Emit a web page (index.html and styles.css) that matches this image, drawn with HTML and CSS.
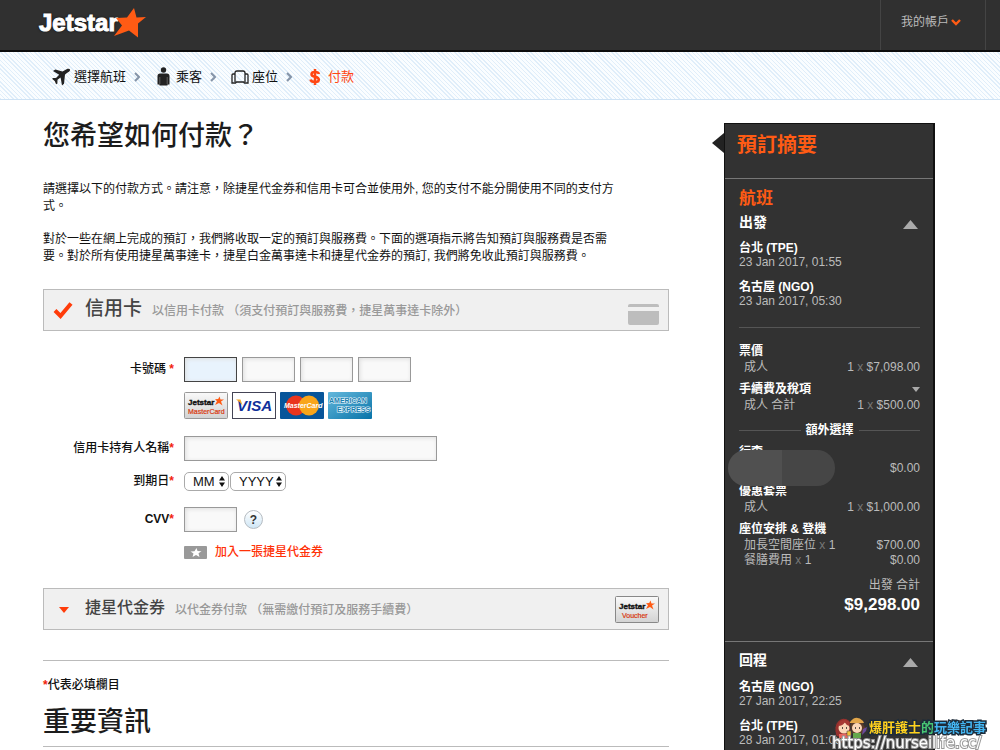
FILE: index.html
```
<!DOCTYPE html>
<html lang="zh-TW">
<head>
<meta charset="utf-8">
<meta name="viewport" content="width=device-width, initial-scale=1">
<title>Jetstar 付款</title>
<link rel="stylesheet" href="styles.css">
</head>
<body>
<header class="topbar">
  <a class="logo" href="#" aria-label="Jetstar">
    <span>Jetstar</span>
    <svg class="logo-star" viewBox="0 0 32 30" aria-hidden="true"><path d="M20 0l2.500 9.500L32 9l-8 6.500 0 14L15 22.500 0 28l8-10.500L2 10l11-.5z"/></svg>
  </a>
  <a class="account" href="#">我的帳戶
    <svg width="10" height="8" viewBox="0 0 10 8" aria-hidden="true"><path d="M1 2l4 4 4-4" fill="none" stroke="#ff5b14" stroke-width="2.400"/></svg>
  </a>
</header>

<nav class="steps" aria-label="步驟">
  <a class="step" href="#">
    <svg width="19" height="18" viewBox="0 0 19 18" aria-hidden="true"><path d="M1 3l2.300-1.500 7.200 2 4-2.200c1.600-.7 3.200-.6 3.500.1.300.8-.5 2-2 2.900l-3 2.100-1 9.400-2 1.700-1.400-8L5.500 11.800l-.1 3.700-1.300.8-1.400-3.300L0 10.800l1.300-.9 2.700.1L7.200 6.700z" fill="#222"/></svg>
    <span>選擇航班</span>
  </a>
  <svg class="sep" viewBox="0 0 6 10" aria-hidden="true"><path d="M1 1l4 4-4 4"/></svg>
  <a class="step step-passenger" href="#">
    <svg width="13" height="19" viewBox="0 0 13 19" aria-hidden="true"><circle cx="6.500" cy="3" r="2.700" fill="#222"/><path d="M3 6.500h7a2.500 2.500 0 0 1 2.500 2.500v8.500h-2v1h-8v-1H.5V9A2.500 2.500 0 0 1 3 6.500z" fill="#222"/><path d="M2.800 10v7M10.200 10v7" stroke="#888" stroke-width=".6"/></svg>
    <span>乘客</span>
  </a>
  <svg class="sep" viewBox="0 0 6 10" aria-hidden="true"><path d="M1 1l4 4-4 4"/></svg>
  <a class="step" href="#">
    <svg width="18" height="14" viewBox="0 0 18 14" aria-hidden="true"><path d="M4 12V3q0-2 2-2h6q2 0 2 2v9M4 4H2Q1 4 1 5v8h3.500l1-1h7l1 1H17V5q0-1-1-1h-2" fill="none" stroke="#222" stroke-width="1.300"/></svg>
    <span>座位</span>
  </a>
  <svg class="sep" viewBox="0 0 6 10" aria-hidden="true"><path d="M1 1l4 4-4 4"/></svg>
  <a class="step step-current" href="#" aria-current="step">
    <svg width="12" height="16" viewBox="0 0 12 16" aria-hidden="true"><path d="M10 5Q9.500 3 6 3 2.500 3 2.500 5.200 2.500 7.200 6 7.800 9.800 8.500 9.800 10.700 9.800 13 6 13 2 13 1.500 10.500M6 0v16" fill="none" stroke="#ff4713" stroke-width="2.500"/></svg>
    <span>付款</span>
  </a>
</nav>

<div class="page">
  <main class="content">
    <h1>您希望如何付款？</h1>
    <p>請選擇以下的付款方式。請注意，除捷星代金券和信用卡可合並使用外, 您的支付不能分開使用不同的支付方式。</p>
    <p>對於一些在網上完成的預訂，我們將收取一定的預訂與服務費。下面的選項指示將告知預訂與服務費是否需要。對於所有使用捷星萬事達卡，捷星白金萬事達卡和捷星代金券的預訂, 我們將免收此預訂與服務費。</p>

    <section class="panel panel-card">
      <svg class="panel-mark" viewBox="0 0 20 18" aria-hidden="true"><path d="M2 9.500l5.500 5.500L18 2.500" fill="none" stroke="#ff3c0a" stroke-width="4"/></svg>
      <h2>信用卡</h2>
      <span class="panel-note">以信用卡付款 （須支付預訂與服務費，捷星萬事達卡除外）</span>
      <svg class="panel-end card-icon" viewBox="0 0 31 21" aria-hidden="true"><path d="M2 0h27q2 0 2 2v1H0V2q0-2 2-2zM0 7h31v12q0 2-2 2H2q-2 0-2-2z" fill="#bdbdbd"/></svg>
    </section>

    <form class="form">
      <div class="row">
        <label for="card1">卡號碼 <i>*</i></label>
        <div class="field digits">
          <input class="box active" id="card1" type="text">
          <input class="box" type="text" aria-label="卡號碼 2">
          <input class="box" type="text" aria-label="卡號碼 3">
          <input class="box" type="text" aria-label="卡號碼 4">
        </div>
      </div>
      <div class="row row-brands">
        <div class="field brands">
          <svg viewBox="0 0 44 27" role="img" aria-label="Jetstar MasterCard"><defs><linearGradient id="grey" x2="0" y2="1"><stop stop-color="#fafafa"/><stop offset="1" stop-color="#d2d2d2"/></linearGradient></defs><rect x=".5" y=".5" width="43" height="26" rx="1" fill="url(#grey)" stroke="#999"/><text x="4" y="13" class="brand-jet">Jetstar</text><path d="M35.500 4.500l1 3h3.500l-3 2 1.500 4-3.500-2.500-4 2 2-3.800-2-2 3.200-.2z" fill="#ff5b14"/><text x="4" y="22" class="brand-sub">MasterCard</text></svg>
          <svg viewBox="0 0 44 27" role="img" aria-label="VISA"><rect x=".5" y=".5" width="43" height="26" fill="#fff" stroke="#445"/><text x="5" y="19" class="brand-visa">VISA</text><path d="M4 7.500h4.500l2 6Q8.500 10 4 7.500z" fill="#f5a623"/></svg>
          <svg viewBox="0 0 44 27" role="img" aria-label="MasterCard"><rect width="44" height="27" rx="1" fill="#07559a"/><circle cx="16" cy="13.500" r="10" fill="#e9351e"/><circle cx="29" cy="13.500" r="10" fill="#f8a51b"/><text x="4" y="16" class="brand-mc">MasterCard</text></svg>
          <svg viewBox="0 0 44 27" role="img" aria-label="American Express"><defs><linearGradient id="blue" x2="1" y2="1"><stop stop-color="#64b8dc"/><stop offset="1" stop-color="#0873a8"/></linearGradient></defs><rect width="44" height="27" rx="1" fill="url(#blue)"/><text x="1" y="11" class="brand-ax">AMERICAN</text><text x="9" y="20" class="brand-ax">EXPRESS</text></svg>
        </div>
      </div>
      <div class="row row-name">
        <label for="holder">信用卡持有人名稱<i>*</i></label>
        <div class="field"><input class="box box-wide" id="holder" type="text"></div>
      </div>
      <div class="row row-expiry">
        <label for="month">到期日<i>*</i></label>
        <div class="field expiry">
          <span class="pick"><select id="month"><option>MM</option></select><svg viewBox="0 0 6 11" aria-hidden="true"><path d="M3 0l3 4.500H0zM3 11L0 6.500h6z"/></svg></span>
          <span class="pick pick-year"><select aria-label="年"><option>YYYY</option></select><svg viewBox="0 0 6 11" aria-hidden="true"><path d="M3 0l3 4.500H0zM3 11L0 6.500h6z"/></svg></span>
        </div>
      </div>
      <div class="row row-cvv">
        <label for="cvv"><b>CVV</b><i>*</i></label>
        <div class="field cvv"><input class="box" id="cvv" type="text"><button class="help" type="button">?</button></div>
      </div>
      <div class="row row-voucher">
        <a class="field voucher-link" href="#">
          <svg width="23" height="13" viewBox="0 0 23 13" aria-hidden="true"><rect width="23" height="13" rx="1" fill="#999"/><path d="M12.500 2l1 3 4 .3-3 2 1 3.700-3.500-2L8.500 11l1-3.500-3-2 4-.3z" fill="#fff"/></svg>
          <span>加入一張捷星代金券</span>
        </a>
      </div>
    </form>

    <section class="panel panel-voucher">
      <svg class="panel-mark" viewBox="0 0 20 18" aria-hidden="true"><path d="M6 7h10l-5 6z" fill="#ff3c0a"/></svg>
      <h2>捷星代金券</h2>
      <span class="panel-note">以代金券付款 （無需繳付預訂及服務手續費）</span>
      <svg class="panel-end voucher-icon" viewBox="0 0 44 27" role="img" aria-label="Jetstar Voucher"><rect x=".5" y=".5" width="43" height="26" rx="1" fill="url(#grey)" stroke="#888"/><text x="4" y="13" class="brand-jet">Jetstar</text><path d="M35.500 4.500l1 3h3.500l-3 2 1.500 4-3.500-2.500-4 2 2-3.800-2-2 3.200-.2z" fill="#ff5b14"/><text x="7" y="22" class="brand-sub">Voucher</text></svg>
    </section>

    <div class="required"><i>*</i>代表必填欄目</div>
    <h1 class="info-title">重要資訊</h1>
  </main>

  <aside class="summary">
    <h2 class="summary-title">預訂摘要</h2>
    <section class="leg">
      <h3>航班</h3>
      <div class="leg-head"><h4>出發</h4><button type="button" aria-label="收合出發"></button></div>
      <div class="stop"><b>台北 (TPE)</b><span>23 Jan 2017, 01:55</span></div>
      <div class="stop"><b>名古屋 (NGO)</b><span>23 Jan 2017, 05:30</span></div>
      <hr>
      <div class="cost">
        <b>票價</b>
        <div class="line"><span>成人</span><span>1 <em>x</em> $7,098.00</span></div>
      </div>
      <div class="cost">
        <b class="open">手續費及稅項</b>
        <div class="line"><span>成人 合計</span><span>1 <em>x</em> $500.00</span></div>
      </div>
      <div class="extras"><b>額外選擇</b></div>
      <div class="cost baggage">
        <b>行李</b>
        <div class="line"><span></span><span>$0.00</span></div>
        <div class="mask"></div>
      </div>
      <div class="cost">
        <b>優惠套票</b>
        <div class="line"><span>成人</span><span>1 <em>x</em> $1,000.00</span></div>
      </div>
      <div class="cost seats">
        <b>座位安排 &amp; 登機</b>
        <div class="line"><span>加長空間座位 <em>x</em> 1</span><span>$700.00</span></div>
        <div class="line"><span>餐膳費用 <em>x</em> 1</span><span>$0.00</span></div>
      </div>
      <div class="total"><span>出發 合計</span><strong>$9,298.00</strong></div>
    </section>
    <section class="leg leg-return">
      <div class="leg-head"><h4>回程</h4><button type="button" aria-label="收合回程"></button></div>
      <div class="stop"><b>名古屋 (NGO)</b><span>27 Jan 2017, 22:25</span></div>
      <div class="stop"><b>台北 (TPE)</b><span>28 Jan 2017, 01:05</span></div>
    </section>
  </aside>
</div>

<div class="watermark">
  <div class="watermark-name">
    <svg width="37" height="21" viewBox="0 0 35 21" aria-hidden="true"><path d="M3 19Q0 9 5 4q5-5 11-1 4 4 3 14l-4 3H5z" fill="#96312d" stroke="#333"/><circle cx="11" cy="11" r="5.500" fill="#fbd7b8"/><path d="M5 9q5 0 7-4 1 4 6 4-1-6-7-6-5 0-6 6z" fill="#a83a35"/><path d="M17 9Q17 2 23 1q7-1 8 7l2 3-3 6H19z" fill="#5b3b28" stroke="#333"/><path d="M17 5q6-8 13-1l1 2H17z" fill="#e2a64a"/><circle cx="24" cy="11" r="5" fill="#fbd7b8"/><path d="M9 11h1M13 11h1M22 11h1M26 11h1" stroke="#222" stroke-width="1.500"/><path d="M6 17h9v4H6z" fill="#e8635c"/><path d="M14 14h4v5h-4z" fill="#f4c233" stroke="#555" stroke-width=".6"/><path d="M20 16h8v5h-8z" fill="#65a84c"/><path d="M30 12l4-2-1 4-4 4z" fill="#6a4b9c"/></svg>
    <span class="wm-yellow">爆肝護士</span><span class="wm-green">的</span><span class="wm-blue">玩樂記事</span>
  </div>
  <div class="watermark-url">https://nurseilife.cc/</div>
</div>
</body>
</html>
```
FILE: styles.css
```
* { box-sizing: border-box; }
body {
  margin: 0;
  background: #fff;
  color: #111;
  font: 12px/17px "Liberation Sans", "Noto Sans CJK TC", sans-serif;
}
h1, h2, h3, h4, p { margin: 0; }
a { color: inherit; text-decoration: none; }
i { color: #f21d0d; font-style: normal; font-weight: bold; }
svg { flex: none; }

.topbar {
  display: flex;
  justify-content: space-between;
  height: 52px;
  padding: 0 14px 0 39px;
  background: #303030;
  border-bottom: 2px solid #0c0c0c;
}
.logo {
  display: flex;
  align-items: flex-start;
  padding-top: 8px;
  color: #fff;
  font-size: 24px;
  font-weight: bold;
  line-height: 30px;
  text-shadow: 0 0 3px #000;
}
.logo span { -webkit-text-stroke: 1px #fff; }
.logo-star { width: 32px; height: 30px; margin-left: -4px; fill: #ff5b14; }
.account {
  display: flex;
  align-items: center;
  gap: 2px;
  padding: 0 24px 6px 20px;
  border-left: 1px solid #444;
  border-right: 1px solid #444;
  color: #bbb;
}

.steps {
  display: flex;
  align-items: center;
  height: 48px;
  padding: 2px 52px 0;
  gap: 8px;
  background: repeating-linear-gradient(45deg, #e0eefa 0 1px, #fafdff 1px 3px);
  border-bottom: 1px solid #cfe3f5;
  font-size: 13px;
}
.step { display: flex; align-items: center; gap: 3px; }
.step-passenger { gap: 6px; margin-left: 2px; }
.step-current { gap: 7px; margin-left: 2px; color: #ff4713; }
.sep { width: 6px; height: 10px; margin-right: 7px; fill: none; stroke: #8594a8; stroke-width: 2; }

.page {
  display: flex;
  gap: 55px;
  align-items: flex-start;
  padding: 0 65px 0 43px;
}
.content { flex: 1; min-width: 0; padding-top: 17px; }
h1 { font-size: 27px; line-height: 38px; font-weight: 500; color: #1c1c1c; }
.content > p { margin-bottom: 16px; padding-right: 48px; }
.content > h1 + p { margin-top: 26px; }

.panel {
  display: flex;
  align-items: center;
  height: 42px;
  padding: 0 9px;
  background: #f0f0f0;
  border: 1px solid #bbb;
}
.content > .panel-card { margin-top: 24px; }
.panel-mark { width: 20px; height: 18px; margin-right: 12px; }
.panel h2 { color: #444; font-size: 19px; line-height: 24px; font-weight: 500; }
.panel-card h2 { padding-bottom: 2px; }
.panel-voucher h2 { font-size: 16px; padding-bottom: 2px; }
.panel-note { margin-left: 10px; padding-top: 3px; color: #999; font-weight: 500; }
.panel-end { margin-left: auto; }
.card-icon { width: 31px; height: 21px; margin-top: 8px; }
.voucher-icon { width: 44px; height: 27px; }

.form { padding: 26px 0 24px; }
.row { display: flex; align-items: center; }
.row label { width: 131px; text-align: right; font-weight: 500; }
.field { display: flex; align-items: center; margin-left: 10px; }
.digits { gap: 5px; }
.box {
  width: 53px;
  height: 25px;
  padding: 2px 4px;
  border: 1px solid #999;
  border-radius: 0;
  background: #f9f9f9;
  box-shadow: inset 1px 1px 4px #ddd;
  font: inherit;
}
.active { background: #e8f3fd; border-color: #444; }
.box-wide { width: 253px; }
.row-brands { margin-top: 10px; padding-left: 131px; }
.brands { gap: 4px; }
.brands svg { width: 44px; height: 27px; }
.brand-jet { font: bold 8px "Liberation Sans", sans-serif; fill: #111; stroke: #111; stroke-width: .4; }
.brand-sub { font: 7px "Liberation Sans", sans-serif; fill: #d8360c; stroke: #d8360c; stroke-width: .2; }
.brand-visa { font: italic bold 15px "Liberation Sans", sans-serif; fill: #10309a; }
.brand-mc { font: italic bold 7px "Liberation Sans", sans-serif; fill: #fff; }
.brand-ax { font: bold 7px "Liberation Sans", sans-serif; fill: #1a7fb0; stroke: #e4f5fc; stroke-width: 1.2; paint-order: stroke; }
.row-name { margin-top: 17px; }
.row-expiry { margin-top: 11px; }
.expiry { gap: 1px; }
.pick { position: relative; display: flex; width: 45px; }
.pick-year { width: 56px; }
.pick select {
  width: 100%;
  height: 19px;
  padding: 0 0 0 8px;
  appearance: none;
  border: 1px solid #aaa;
  border-radius: 5px;
  background: #fff;
  color: #111;
  font: 13px/16px "Liberation Sans", sans-serif;
}
.pick svg { position: absolute; right: 4px; top: 4px; width: 6px; height: 11px; fill: #111; pointer-events: none; }
.row-cvv { margin-top: 16px; }
.cvv { gap: 7px; }
.help {
  width: 19px;
  height: 19px;
  padding: 0;
  border: 1px solid #b5bcc2;
  border-radius: 50%;
  background: linear-gradient(#fff, #cfe6f5);
  color: #333;
  font: bold 12px/16px "Liberation Sans", sans-serif;
}
.row-voucher { margin-top: 12px; padding-left: 131px; }
.voucher-link { gap: 8px; color: #ff3208; font-weight: 500; }

.panel-voucher { margin-top: 3px; }
.required {
  margin-top: 30px;
  padding-top: 16px;
  border-top: 1px solid #bbb;
  font-weight: 500;
}
.info-title { margin-top: 9px; padding-bottom: 5px; border-bottom: 1px solid #bbb; }

.summary {
  position: relative;
  flex: 0 0 211px;
  margin-top: 23px;
  background: #323232;
  border: 1px solid #111;
  border-width: 1px 2px 0 1px;
  color: #bbb;
  line-height: 14px;
}
.summary::before {
  content: "";
  position: absolute;
  left: -13px;
  top: 9px;
  border: 10px solid transparent;
  border-width: 10px 12px 10px 0;
  border-right-color: #222;
}
.summary-title {
  height: 55px;
  padding: 9px 12px;
  border-bottom: 1px solid #777;
  color: #ff5b14;
  font-size: 20px;
  line-height: 24px;
}
.leg { padding: 9px 13px 23px 14px; }
.leg h3 { color: #ff5b14; font-size: 17px; line-height: 22px; }
.leg-head { display: flex; justify-content: space-between; align-items: center; height: 24px; margin-bottom: 7px; }
.leg-head h4 { color: #fff; font-size: 14px; line-height: 20px; }
.leg-head button {
  width: 15px;
  height: 9px;
  margin: 5px 2px 0 0;
  padding: 0;
  border: 0;
  background: #aaa;
  clip-path: polygon(50% 0, 100% 100%, 0 100%);
}
.leg b { color: #fff; }
.stop { margin-bottom: 11px; }
.stop b, .stop span { display: block; }
.leg hr { height: 1px; margin: 19px 0 15px; border: 0; background: #555; }
.cost { margin-bottom: 7px; }
.cost b { display: block; line-height: 17px; }
.cost em { color: #777; font-style: normal; }
.line { display: flex; justify-content: space-between; padding-left: 5px; }
.cost .open { display: flex; justify-content: space-between; align-items: center; }
.open::after { content: ""; border: 4px solid transparent; border-top: 5px solid #aaa; border-bottom: 0; }
.extras { display: flex; align-items: center; gap: 5px; margin: 11px 0 7px; line-height: 14px; }
.extras::before, .extras::after { content: ""; flex: 1; height: 1px; background: #555; }
.baggage { position: relative; margin-bottom: 8px; }
.mask {
  position: absolute;
  left: -11px;
  top: 6px;
  width: 107px;
  height: 36px;
  border-radius: 18px;
  background: linear-gradient(90deg, #505050 50%, #464646 50%);
}
.seats .line { line-height: 15px; }
.total { margin-top: 10px; text-align: right; }
.total span, .total strong { display: block; }
.total strong { color: #fff; font-size: 17px; line-height: 26px; }
.leg-return { padding: 6px 13px 3px 14px; border-top: 1px solid #777; }
.leg-return .leg-head { margin-bottom: 8px; }
.leg-return .stop:last-child { margin-bottom: 0; }

.watermark { position: fixed; right: 14px; bottom: 0; }
.watermark-name { display: flex; align-items: center; height: 19px; font-size: 13px; font-weight: bold; }
.watermark-name span { -webkit-text-stroke: 3px #1d2c3a; paint-order: stroke fill; }
.watermark-name .wm-yellow { color: #ffd21e; }
.watermark-name .wm-green { color: #48c774; }
.watermark-name .wm-blue { color: #43b4f0; }
.watermark-url {
  color: #fff;
  font: 15px/13px "DejaVu Sans", sans-serif;
  -webkit-text-stroke: 2px #999;
  paint-order: stroke fill;
}
```
